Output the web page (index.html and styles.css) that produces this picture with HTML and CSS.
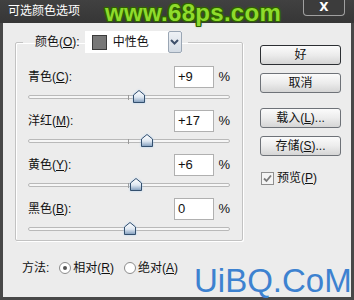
FILE: index.html
```html
<!DOCTYPE html>
<html>

<head>
    <title>可选颜色选项</title>
    <link rel="stylesheet" href="styles.css">
</head>

<body>
    <div class="window">
        <div class="titlebar">
            <span class="title">可选颜色选项</span>
            <span class="close">X</span>
        </div>

        <div class="dialog">
            <div class="left">
                <fieldset class="group">
                    <legend>
                        <span class="legend-in">
                            <span>颜色(<u>O</u>):</span>
                            <span class="select">
                                <span class="swatch"></span>
                                <span class="select-text">中性色</span>
                                <span class="arrow">
                                    <svg width="9" height="6" viewBox="0 0 9 6"><path d="M1 1 L4.5 4.5 L8 1" fill="none" stroke="#3d4f6a" stroke-width="2"/></svg>
                                </span>
                            </span>
                        </span>
                    </legend>

                    <div class="channel">
                        <div class="row">
                            <label>青色(<u>C</u>):</label>
                            <span class="val">+9</span>
                            <span class="pct">%</span>
                        </div>
                        <div class="slider">
                            <span class="track"></span>
                            <span class="tick"></span>
                            <span class="thumb" style="left: 104.5px"><svg width="12" height="13" viewBox="0 0 12 13"><defs><linearGradient id="tg" x1="0" y1="0" x2="0" y2="1"><stop offset="0" stop-color="#ffffff"/><stop offset="0.55" stop-color="#dfe8f2"/><stop offset="1" stop-color="#7f9cbc"/></linearGradient></defs><path d="M0.5 5 L6 0.5 L11.5 5 L11.5 12.5 L0.5 12.5 Z" fill="url(#tg)" stroke="#34506e"/></svg></span>
                        </div>
                    </div>

                    <div class="channel">
                        <div class="row">
                            <label>洋红(<u>M</u>):</label>
                            <span class="val">+17</span>
                            <span class="pct">%</span>
                        </div>
                        <div class="slider">
                            <span class="track"></span>
                            <span class="tick"></span>
                            <span class="thumb" style="left: 112.5px"><svg width="12" height="13" viewBox="0 0 12 13"><path d="M0.5 5 L6 0.5 L11.5 5 L11.5 12.5 L0.5 12.5 Z" fill="url(#tg)" stroke="#34506e"/></svg></span>
                        </div>
                    </div>

                    <div class="channel">
                        <div class="row">
                            <label>黄色(<u>Y</u>):</label>
                            <span class="val">+6</span>
                            <span class="pct">%</span>
                        </div>
                        <div class="slider">
                            <span class="track"></span>
                            <span class="tick"></span>
                            <span class="thumb" style="left: 101.5px"><svg width="12" height="13" viewBox="0 0 12 13"><path d="M0.5 5 L6 0.5 L11.5 5 L11.5 12.5 L0.5 12.5 Z" fill="url(#tg)" stroke="#34506e"/></svg></span>
                        </div>
                    </div>

                    <div class="channel">
                        <div class="row">
                            <label>黑色(<u>B</u>):</label>
                            <span class="val">0</span>
                            <span class="pct">%</span>
                        </div>
                        <div class="slider">
                            <span class="track"></span>
                            <span class="tick"></span>
                            <span class="thumb" style="left: 95.5px"><svg width="12" height="13" viewBox="0 0 12 13"><path d="M0.5 5 L6 0.5 L11.5 5 L11.5 12.5 L0.5 12.5 Z" fill="url(#tg)" stroke="#34506e"/></svg></span>
                        </div>
                    </div>
                </fieldset>

                <div class="method">
                    <span>方法:</span>
                    <span class="radio checked"></span>
                    <span class="radio-label">相对(<u>R</u>)</span>
                    <span class="radio"></span>
                    <span class="radio-label">绝对(<u>A</u>)</span>
                </div>
            </div>

            <div class="right">
                <button class="btn default">好</button>
                <button class="btn">取消</button>
                <button class="btn gap">载入(<u>L</u>)...</button>
                <button class="btn">存储(<u>S</u>)...</button>
                <div class="preview">
                    <span class="checkbox">
                        <svg width="9" height="9" viewBox="0 0 9 9"><path d="M1 4.5 L3.5 7 L8 1.5" fill="none" stroke="#7a7a7a" stroke-width="1.8"/></svg>
                    </span>
                    <span>预览(<u>P</u>)</span>
                </div>
            </div>
        </div>

        <!-- watermarks over the screenshot -->
        <div class="mark-68ps">www.68ps.com</div>
        <div class="mark-uibq">UiBQ.CoM</div>
    </div>
</body>

</html>
```

FILE: styles.css
```css
* {
    box-sizing: border-box;
}

body {
    margin: 0;
    width: 354px;
    height: 300px;
    overflow: hidden;
    font-family: "Liberation Sans", "Noto Sans CJK SC", sans-serif;
    font-size: 12px;
    color: #111;
}

u {
    text-decoration: underline;
    text-underline-offset: 1px;
}

.window {
    position: relative;
    width: 354px;
    height: 300px;
    background-color: #484848;
    display: flex;
    flex-direction: column;
}

.titlebar {
    height: 23px;
    display: flex;
    justify-content: space-between;
    align-items: flex-start;
    padding: 0 9px 0 8px;
    background: linear-gradient(#414141, #363636);
}

.title {
    color: #fff;
    line-height: 23px;
}

.close {
    width: 42px;
    height: 16px;
    border: 1px solid #a0a0a0;
    border-top: none;
    border-radius: 0 0 4px 4px;
    background-color: #3c3c3c;
    color: #fff;
    font-family: "DejaVu Sans", sans-serif;
    font-weight: bold;
    font-size: 12px;
    line-height: 15px;
    text-align: center;
}

.dialog {
    flex: 1;
    margin: 0 3px 3px;
    background-color: #ececec;
    display: flex;
}

.left {
    padding: 8px 0 0 12px;
}

.group {
    margin: 0;
    width: 228px;
    padding: 13px 12px 5px;
    border: 1px solid #c2c2c2;
    border-radius: 2px;
    box-shadow: inset 1px 1px 0 #fff, 1px 1px 0 #fff;
}

.group legend {
    margin-left: -5px;
    padding: 0 6px 0 12px;
}

.legend-in {
    display: flex;
    align-items: center;
    gap: 5px;
    height: 22px;
    line-height: 16px;
}

.select {
    display: flex;
    align-items: center;
    height: 22px;
    width: 97px;
    background-color: #fff;
}

.swatch {
    width: 15px;
    height: 15px;
    margin-left: 7px;
    background-color: #777;
    border: 1px solid #3a3a3a;
}

.select-text {
    flex: 1;
    margin-left: 6px;
}

.arrow {
    width: 14px;
    height: 22px;
    display: flex;
    align-items: center;
    justify-content: center;
    background: linear-gradient(#eef1f5, #d3dbe4);
    border: 1px solid #9aa6b4;
    border-radius: 2px;
}

.channel {
    display: flex;
    flex-direction: column;
}

.channel + .channel {
    margin-top: 7px;
}

.row {
    display: flex;
    align-items: center;
    height: 22px;
    line-height: 16px;
}

.row label {
    flex: 1;
}

.val {
    width: 40px;
    height: 22px;
    padding-left: 3px;
    line-height: 20px;
    background-color: #fff;
    border: 1px solid #b0b0b0;
    font-size: 13px;
}

.pct {
    width: 16px;
    text-align: right;
    font-size: 13px;
}

.slider {
    position: relative;
    height: 12px;
    margin-top: 3px;
}

.track {
    position: absolute;
    left: 0;
    right: 0;
    top: 4px;
    height: 4px;
    border: 1px solid #b9b9b9;
    border-radius: 2px;
    background-color: #f6f6f6;
}

.tick {
    position: absolute;
    left: 100px;
    top: 4px;
    width: 1px;
    height: 5px;
    background-color: #999;
}

.thumb {
    position: absolute;
    top: -1px;
    width: 12px;
    height: 13px;
    filter: drop-shadow(0 0 1px #b9d6f2);
}

.thumb svg {
    display: block;
}

.method {
    display: flex;
    align-items: center;
    margin: 19px 0 0 7px;
    line-height: 16px;
}

.radio {
    width: 12px;
    height: 12px;
    margin-left: 10px;
    margin-right: 2px;
    border: 1px solid #8c8c8c;
    border-radius: 50%;
    background-color: #fff;
    display: flex;
    align-items: center;
    justify-content: center;
}

.radio.checked::after {
    content: "";
    width: 4px;
    height: 4px;
    border-radius: 50%;
    background-color: #555;
}

.right {
    margin-left: 17px;
    padding-top: 22px;
    display: flex;
    flex-direction: column;
}

.btn {
    width: 81px;
    height: 20px;
    margin: 0 0 8px;
    padding: 0;
    border: 1px solid #6e7278;
    border-radius: 3px;
    background: linear-gradient(#fbfbfb, #ececec 50%, #d5d5d5);
    font-family: "Liberation Sans", "Noto Sans CJK SC", sans-serif;
    font-size: 12px;
    line-height: 18px;
    color: #111;
}

.btn.default {
    border-color: #2c2f33;
}

.btn.gap {
    margin-top: 7px;
}

.preview {
    display: flex;
    align-items: center;
    margin: 6px 0 0 1px;
    line-height: 16px;
}

.checkbox {
    width: 13px;
    height: 13px;
    margin-right: 3px;
    border: 1px solid #8f8f8f;
    background-color: #f4f4f4;
    display: flex;
    align-items: center;
    justify-content: center;
}

.mark-68ps {
    position: absolute;
    left: 105px;
    top: 1px;
    font-family: "Liberation Sans", sans-serif;
    font-weight: bold;
    font-size: 24px;
    line-height: 24px;
    letter-spacing: 0.3px;
    color: #8edb2c;
    text-shadow: 1px 0 0 #2f6200, -1px 0 0 #2f6200, 0 1px 0 #2f6200, 0 -1px 0 #2f6200,
        1px 1px 0 #2f6200, -1px -1px 0 #2f6200, 1px -1px 0 #2f6200, -1px 1px 0 #2f6200,
        0 0 3px #4a8a10;
}

.mark-uibq {
    position: absolute;
    left: 194px;
    top: 262px;
    font-family: "Liberation Sans", sans-serif;
    font-size: 33px;
    line-height: normal;
    color: #3d82d0;
    white-space: nowrap;
}
```
